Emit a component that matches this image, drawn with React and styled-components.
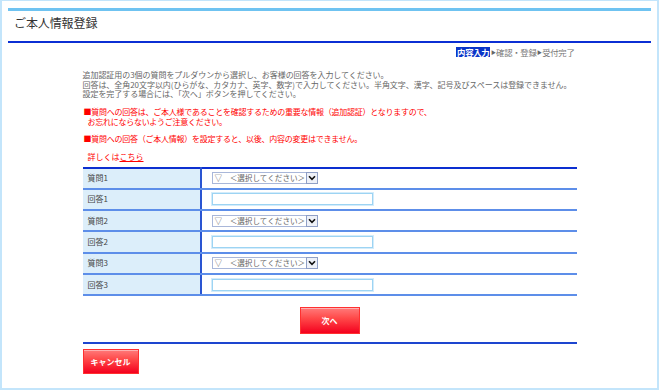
import React from 'react'
import styled, { createGlobalStyle } from 'styled-components'

const GlobalStyle = createGlobalStyle`
  html, body {
    margin: 0;
    padding: 0;
    background: #fff;
  }
  body {
    font-family: "Noto Sans CJK JP", "Noto Sans", sans-serif;
    color: #333;
  }
`

const Frame = styled.div`
  width: 659px;
  height: 390px;
  box-sizing: border-box;
  border: 2px solid #c3e5fb;
  border-top-width: 1px;
  padding: 7px 6px 0;
  background: #fff;
`

const Header = styled.header`
  border-top: 3px solid #6fc3f1;
  border-bottom: 2px solid #0b2fd4;
  height: 30px;
  box-sizing: content-box;
  padding-left: 6px;
  h1 {
    margin: 0;
    padding-top: 5px;
    font-size: 12px;
    line-height: 14px;
    font-weight: 400;
    color: #333;
    letter-spacing: -0.1px;
  }
`

const Content = styled.main`
  width: 494px;
  margin: 0 auto;
`

const Steps = styled.div`
  margin-top: 4px;
  display: flex;
  justify-content: flex-end;
  align-items: center;
  height: 10px;
  padding-right: 2px;
  font-size: 8.4px;
  line-height: 10px;
  color: #777;
  letter-spacing: -0.3px;
`

const Step = styled.span`
  ${p => p.$active && `
    background: #0a35c8;
    color: #fff;
    font-weight: 700;
    padding: 0 1px;
  `}
`

const Arrow = styled.span`
  font-size: 5px;
  color: #666;
  margin: 0 0.5px;
`

const Intro = styled.p`
  margin: 13px 0 0;
  font-size: 8px;
  line-height: 9.5px;
  color: #666;
  letter-spacing: -0.05px;
`

const Notice = styled.p`
  margin: ${p => p.$gap}px 0 0;
  font-size: 8px;
  line-height: 10px;
  color: #f00;
  letter-spacing: -0.25px;
  padding-left: 1px;
  span {
    display: block;
    padding-left: 4px;
  }
`

const More = styled.p`
  margin: 8px 0 0;
  padding-left: 5px;
  font-size: 8px;
  line-height: 10px;
  color: #f00;
  a {
    color: #f00;
    text-decoration: underline;
  }
`

const Table = styled.table`
  margin-top: 5px;
  width: 494px;
  border-collapse: collapse;
  border-top: 2px solid #0c2fd0;
  td {
    height: 19.3px;
    padding: 0;
    line-height: 10px;
    font-size: 8px;
    border-bottom: 2px solid #5d8ee9;
  }
`

const Label = styled.td`
  width: 118px;
  background: #dceefa;
  color: #444;
  padding-left: 5px !important;
  box-sizing: border-box;
`

const Value = styled.td`
  border-left: 2px solid #2a55d2;
  padding-left: 10px !important;
`

const Select = styled.div`
  display: flex;
  align-items: center;
  width: 106px;
  height: 12px;
  box-sizing: border-box;
  border: 1px solid #a9b7d9;
  background: #fff;
  font-size: 7.6px;
  color: #666;
  span {
    flex: 1;
    padding-left: 2px;
    white-space: nowrap;
    overflow: hidden;
  }
`

const SelectButton = styled.div`
  width: 12px;
  height: 12px;
  margin: -1px -1px -1px 0;
  box-sizing: border-box;
  border: 1px solid #8f9fc6;
  background: #eef1f8;
  display: flex;
  align-items: center;
  justify-content: center;
`

const Input = styled.input`
  display: block;
  width: 161px;
  height: 12px;
  box-sizing: border-box;
  border: 1px solid #9dd4f3;
  outline: 1px solid #d3ecfb;
  background: #fff;
  padding: 0;
`

const Button = styled.button`
  display: block;
  width: ${p => p.$w}px;
  height: ${p => p.$h}px;
  box-sizing: border-box;
  border: 1px solid #ff3030;
  background: linear-gradient(#ff7a7a 0%, #ff4a4a 40%, #f4001e 100%);
  box-shadow: inset 0 1px 0 #ffb0b0;
  color: #fff;
  font-family: "Noto Sans CJK JP", sans-serif;
  font-size: 8px;
  font-weight: 700;
  padding: 0;
  cursor: pointer;
`

const NextRow = styled.div`
  display: flex;
  justify-content: center;
  margin-top: 11px;
  padding-bottom: 8px;
  border-bottom: 2px solid #1d45cf;
`

const CancelRow = styled.div`
  margin-top: 5px;
`

const Chevron = () => (
  <svg width="8" height="6" viewBox="0 0 8 6">
    <path d="M1 1.2 L4 4.4 L7 1.2" fill="none" stroke="#111" strokeWidth="1.6" />
  </svg>
)

const rows = [
  { label: '質問1', type: 'select' },
  { label: '回答1', type: 'input' },
  { label: '質問2', type: 'select' },
  { label: '回答2', type: 'input' },
  { label: '質問3', type: 'select' },
  { label: '回答3', type: 'input' },
]

const App = () => {
  return (
    <>
      <GlobalStyle />
      <Frame>
        <Header>
          <h1>ご本人情報登録</h1>
        </Header>
        <Content>
          <Steps>
            <Step $active>内容入力</Step>
            <Arrow>▶</Arrow>
            <Step>確認・登録</Step>
            <Arrow>▶</Arrow>
            <Step>受付完了</Step>
          </Steps>
          <Intro>
            追加認証用の3個の質問をプルダウンから選択し、お客様の回答を入力してください。<br />
            回答は、全角20文字以内(ひらがな、カタカナ、英字、数字)で入力してください。半角文字、漢字、記号及びスペースは登録できません。<br />
            設定を完了する場合には、「次へ」ボタンを押してください。
          </Intro>
          <Notice $gap={8}>
            ■質問への回答は、ご本人様であることを確認するための重要な情報（追加認証）となりますので、
            <span>お忘れにならないようご注意ください。</span>
          </Notice>
          <Notice $gap={7}>
            ■質問への回答（ご本人情報）を設定すると、以後、内容の変更はできません。
          </Notice>
          <More>
            詳しくは<a href="#">こちら</a>
          </More>
          <Table>
            <tbody>
              {rows.map((row) => (
                <tr key={row.label}>
                  <Label>{row.label}</Label>
                  <Value>
                    {row.type === 'select' ? (
                      <Select>
                        <span>▽　＜選択してください＞</span>
                        <SelectButton><Chevron /></SelectButton>
                      </Select>
                    ) : (
                      <Input type="text" />
                    )}
                  </Value>
                </tr>
              ))}
            </tbody>
          </Table>
          <NextRow>
            <Button $w={60} $h={27}>次へ</Button>
          </NextRow>
          <CancelRow>
            <Button $w={56} $h={25}>キャンセル</Button>
          </CancelRow>
        </Content>
      </Frame>
    </>
  )
}

export default App
